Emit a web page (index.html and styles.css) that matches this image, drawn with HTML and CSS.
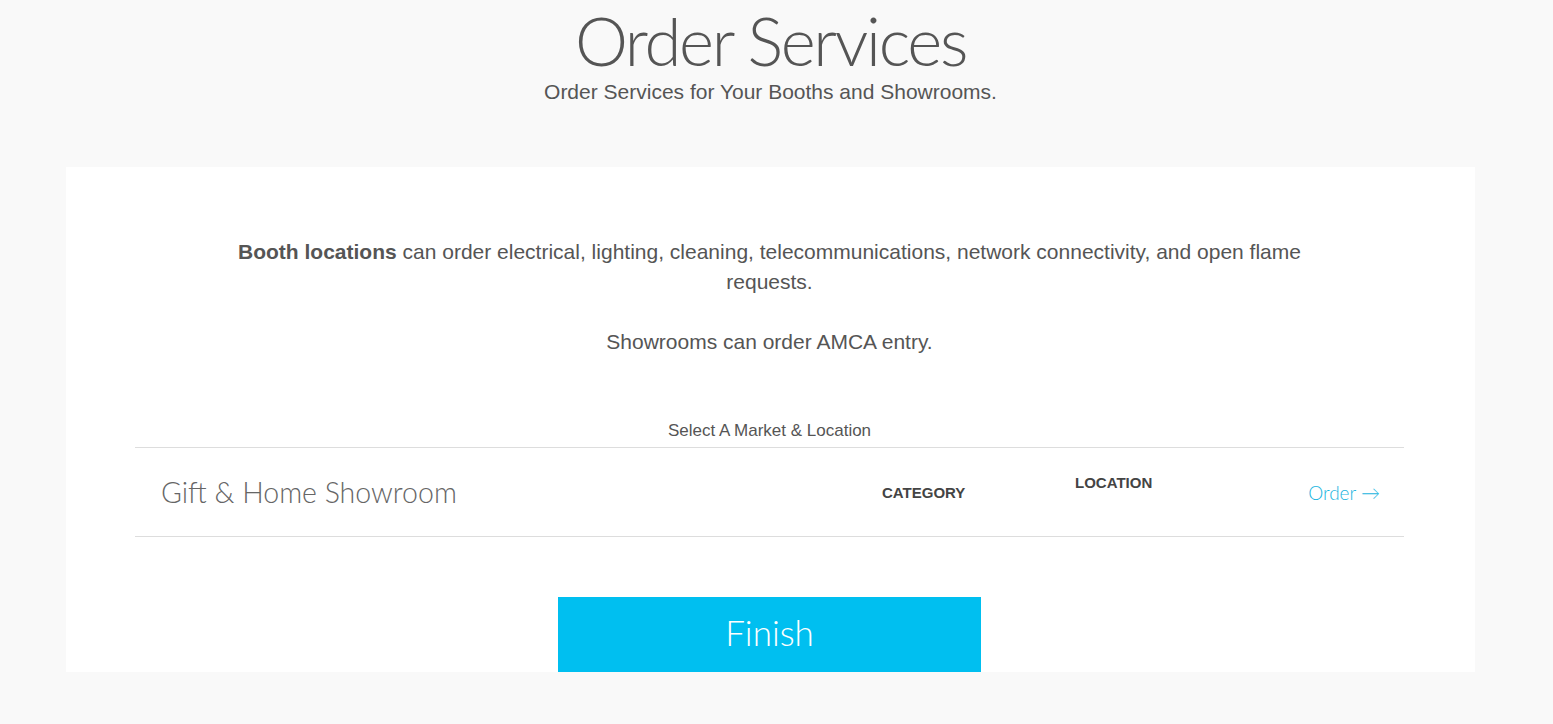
FILE: index.html
```html
<!DOCTYPE html>
<html lang="en">
<head>
    <meta charset="UTF-8">
    <meta name="viewport" content="width=device-width, initial-scale=1.0">
    <title>Order Services</title>
    <link rel="stylesheet" href="styles.css">
</head>
<body>
    <div class="page">
        <header class="page-header">
            <h1>Order Services</h1>
            <p class="subtitle">Order Services for Your Booths and Showrooms.</p>
        </header>

        <div class="card">
            <div class="intro">
                <p><strong>Booth locations</strong> can order electrical, lighting, cleaning, telecommunications, network connectivity, and open flame requests.</p>
                <p>Showrooms can order AMCA entry.</p>
            </div>

            <div class="market">
                <div class="market-label">Select A Market &amp; Location</div>
                <div class="market-row">
                    <div class="market-name">Gift &amp; Home Showroom</div>
                    <div class="market-col">CATEGORY</div>
                    <div class="market-col market-col-up">LOCATION</div>
                    <a href="#" class="order-link">Order &rarr;</a>
                </div>
            </div>

            <div class="actions">
                <button type="button" class="finish-btn">Finish</button>
            </div>
        </div>
    </div>
</body>
</html>
```

FILE: styles.css
```css
body {
    font-family: "Liberation Sans", Arial, sans-serif;
    background-color: #f9f9f9;
    color: #555;
    margin: 0;
    padding: 0;
}

.page {
    margin: 0 78px 0 66px;
}

.page-header {
    text-align: center;
    height: 167px;
}

.page-header h1 {
    font-family: Lato, "Liberation Sans", sans-serif;
    font-weight: 300;
    font-size: 67px;
    letter-spacing: -2.3px;
    line-height: 80px;
    margin: 0;
    color: #555;
}

.subtitle {
    font-size: 21px;
    line-height: 24px;
    margin: 0;
    color: #555;
}

.card {
    background-color: #fff;
    padding: 70px 71px 0 69px;
}

.intro {
    max-width: 1100px;
    margin: 0 auto;
    text-align: center;
    font-size: 21px;
    line-height: 30px;
}

.intro p {
    margin: 0 0 30px;
}

.market {
    margin-top: 64px;
}

.market-label {
    text-align: center;
    font-size: 17px;
    line-height: 20px;
    padding-bottom: 6px;
}

.market-row {
    display: grid;
    grid-template-columns: 721px 193px 1fr auto;
    align-items: center;
    height: 88px;
    padding: 0 24px 0 26px;
    border-top: 1px solid #ddd;
    border-bottom: 1px solid #ddd;
}

.market-name {
    font-family: Lato, "Liberation Sans", sans-serif;
    font-weight: 300;
    font-size: 28.5px;
    color: #666;
}

.market-col {
    font-size: 15px;
    font-weight: bold;
    color: #444;
}

.market-col-up {
    padding-bottom: 20px;
}

.order-link {
    font-family: Lato, "Liberation Sans", sans-serif;
    font-weight: 300;
    font-size: 19px;
    color: #1ab5e0;
    text-decoration: none;
}

.actions {
    text-align: center;
    margin-top: 60px;
}

.finish-btn {
    display: block;
    margin: 0 auto;
    width: 423px;
    height: 75px;
    padding: 0 0 5px;
    border: none;
    background-color: #00bff0;
    color: #fff;
    font-family: Lato, "Liberation Sans", sans-serif;
    font-weight: 300;
    font-size: 35px;
    cursor: pointer;
}
```
